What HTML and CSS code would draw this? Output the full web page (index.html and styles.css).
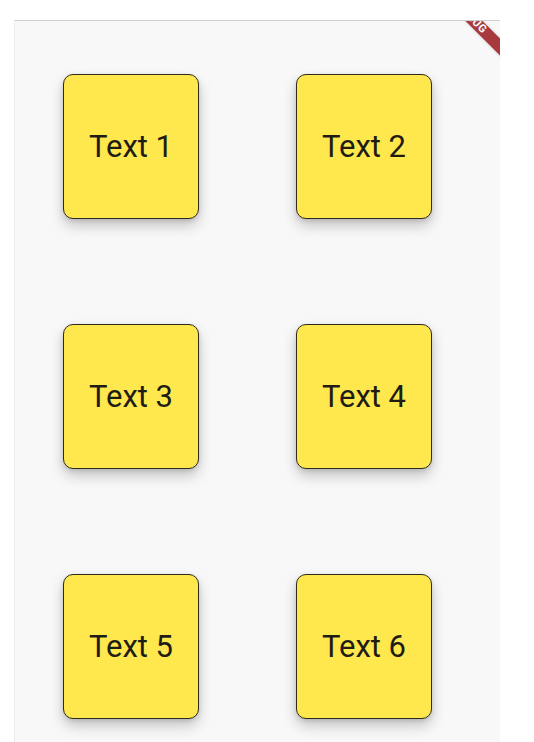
FILE: index.html
```html
<!DOCTYPE html>
<html>
<head>
<meta charset="utf-8">
<link rel="stylesheet" href="styles.css">
</head>
<body>
<div class="device">
  <div class="grid">
    <div class="card">Text 1</div>
    <div class="card">Text 2</div>
    <div class="card">Text 3</div>
    <div class="card">Text 4</div>
    <div class="card">Text 5</div>
    <div class="card">Text 6</div>
  </div>
  <div class="banner"><span>DEBUG</span></div>
</div>
</body>
</html>
```

FILE: styles.css
```css
html, body {
  margin: 0;
  padding: 0;
  background: #ffffff;
  height: 742px;
  overflow: hidden;
}

.device {
  position: relative;
  margin-left: 14px;
  margin-top: 20px;
  width: 486px;
  height: 722px;
  background: #f8f8f8;
  border-top: 1px solid #cfcfcf;
  border-left: 1px solid #ececec;
  overflow: hidden;
  box-sizing: border-box;
}

.grid {
  display: grid;
  grid-template-columns: 136px 136px;
  grid-auto-rows: 145px;
  column-gap: 97px;
  row-gap: 105px;
  padding-top: 53px;
  padding-left: 48px;
}

.card {
  background: #fee84e;
  border: 1.5px solid #2f2a1e;
  border-radius: 10px;
  box-shadow: 0 7px 14px rgba(0, 0, 0, 0.2), 0 2px 5px rgba(0, 0, 0, 0.12);
  display: flex;
  align-items: center;
  justify-content: center;
  font-family: Roboto, "Noto Sans", sans-serif;
  font-size: 31px;
  color: #1e1c14;
  box-sizing: border-box;
}

.banner {
  position: absolute;
  left: 404px;
  top: -1px;
  width: 120px;
  height: 12px;
  background: #a83a3e;
  transform: rotate(45deg);
  display: flex;
  align-items: center;
  justify-content: center;
  box-shadow: 0 0 3px rgba(0, 0, 0, 0.2);
}

.banner span {
  font-family: Roboto, "Noto Sans", sans-serif;
  font-weight: 700;
  font-size: 11px;
  line-height: 12px;
  color: #ffffff;
  letter-spacing: 0.5px;
  margin-right: 21px;
}
```
